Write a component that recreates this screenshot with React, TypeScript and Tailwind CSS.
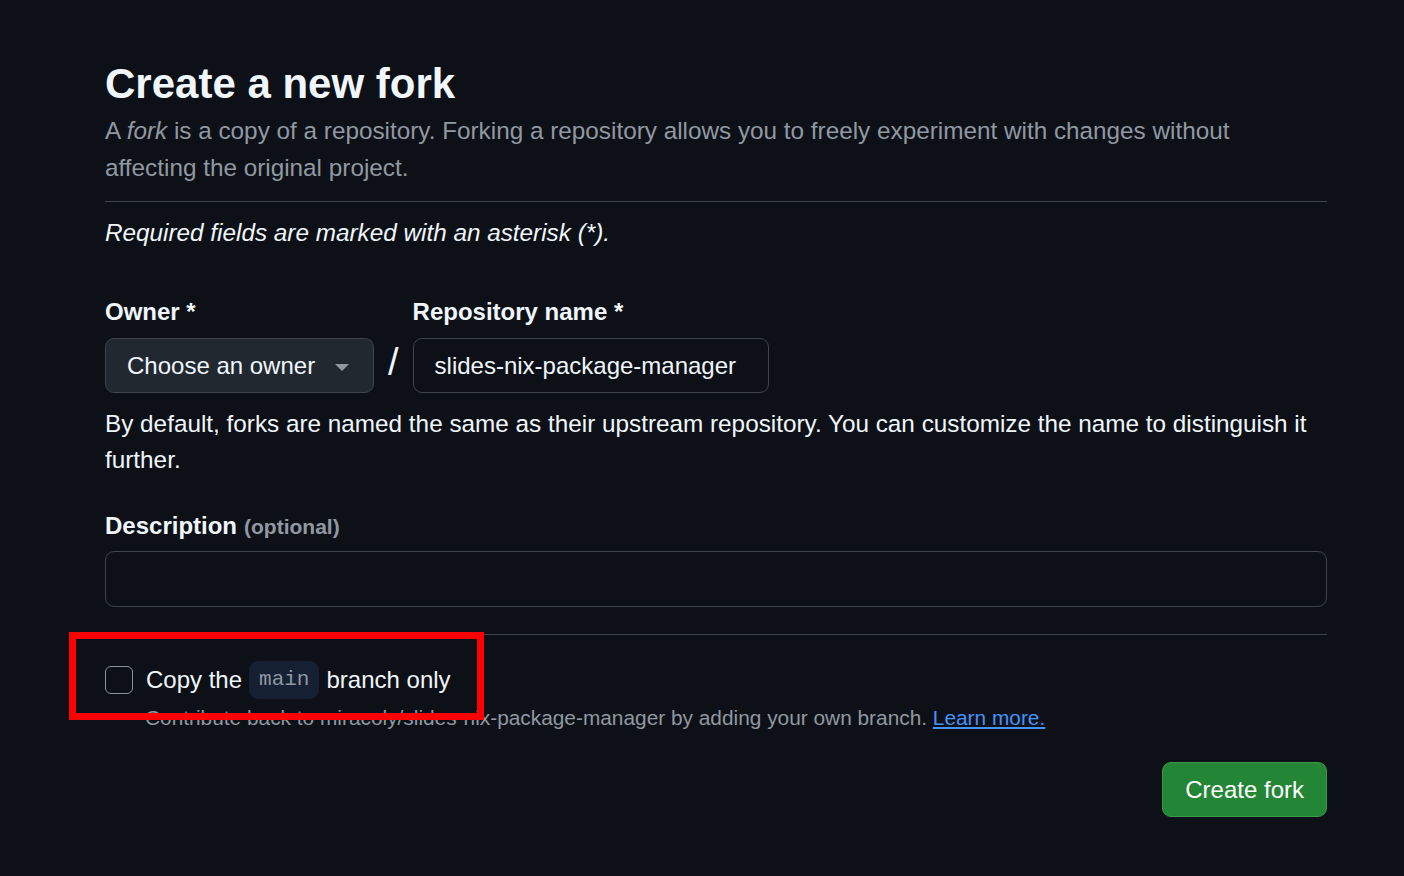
const sans = "font-['Liberation_Sans',Arial,sans-serif]";

function Caret() {
  return (
    <svg width="14" height="8" viewBox="0 0 14 8" className="ml-5 mt-1 text-[#9198a1]">
      <path d="M0 0h14L7 7z" fill="currentColor" />
    </svg>
  );
}

export default function App() {
  return (
    <div className={`min-h-[876px] bg-[#0d1117] text-[#f0f6fc] ${sans}`}>
      <main className="relative ml-[105px] w-[1222px] pt-[58px]">
        <h1 className="text-[42px] font-bold leading-[52px]">Create a new fork</h1>
        <p className="mt-[2px] max-w-[1200px] text-[24.3px] leading-[37px] text-[#9198a1]">
          A <em>fork</em> is a copy of a repository. Forking a repository allows you to freely experiment with changes
          without affecting the original project.
        </p>
        <hr className="mt-[15px] border-t border-[#3d444d]" />
        <p className="mt-[12px] text-[24.3px] italic leading-[37px]">Required fields are marked with an asterisk (*).</p>

        <div className="mt-[43px] flex items-start">
          <div>
            <label className="block text-[24px] font-bold leading-[36px]">Owner *</label>
            <button className="mt-[8px] flex h-[55px] w-[269px] items-center rounded-[9px] border border-[#3d444d] bg-[#212830] pl-[21px] text-[24px] text-[#f0f6fc]">
              Choose an owner
              <Caret />
            </button>
          </div>
          <span className="mx-[14px] mt-[43px] text-[38px] leading-[50px] text-[#f0f6fc]">/</span>
          <div>
            <label className="block text-[24px] font-bold leading-[36px]">Repository name *</label>
            <div className="mt-[8px] flex h-[55px] w-[356px] items-center rounded-[9px] border border-[#3d444d] bg-[#0d1117] pl-[21px] text-[24px]">
              slides-nix-package-manager
            </div>
          </div>
        </div>
        <p className="mt-[13px] text-[24.3px] leading-[36px]">
          By default, forks are named the same as their upstream repository. You can customize the name to distinguish
          it further.
        </p>

        <div className="mt-[30px] flex items-baseline gap-[7px]">
          <span className="text-[24px] font-bold leading-[36px]">Description</span>
          <span className="text-[21px] font-bold text-[#9198a1]">(optional)</span>
        </div>
        <div className="mt-[7px] h-[56px] rounded-[9px] border border-[#3d444d] bg-[#0d1117]" />

        <hr className="mt-[27px] border-t border-[#3d444d]" />

        <div className="mt-[26px] flex items-center">
          <span className="h-[28px] w-[28px] rounded-[6px] border border-[#8b949e] bg-[#0d1117]" />
          <span className="ml-[13px] flex items-center text-[24px] leading-[38px]">
            Copy the
            <code className="mx-[7px] rounded-[9px] bg-[#152032] px-[10px] font-['Liberation_Mono',monospace] text-[21px] leading-[38px] text-[#9198a1]">
              main
            </code>
            branch only
          </span>
        </div>
        <p className="ml-[40px] mt-[4px] text-[20.85px] leading-[30px] text-[#9198a1]">
          Contribute back to miracoly/slides-nix-package-manager by adding your own branch.{" "}
          <a className="text-[#4493f8] underline">Learn more.</a>
        </p>

        <div className="mt-[29px] flex justify-end">
          <button className="h-[55px] rounded-[9px] border border-[#3a9a48] bg-[#238636] px-[22px] text-[24px] text-white">
            Create fork
          </button>
        </div>

        <div className="pointer-events-none absolute left-[-36px] top-[632px] h-[88px] w-[415px] border-[7px] border-[#ff0000]" />
      </main>
    </div>
  );
}
